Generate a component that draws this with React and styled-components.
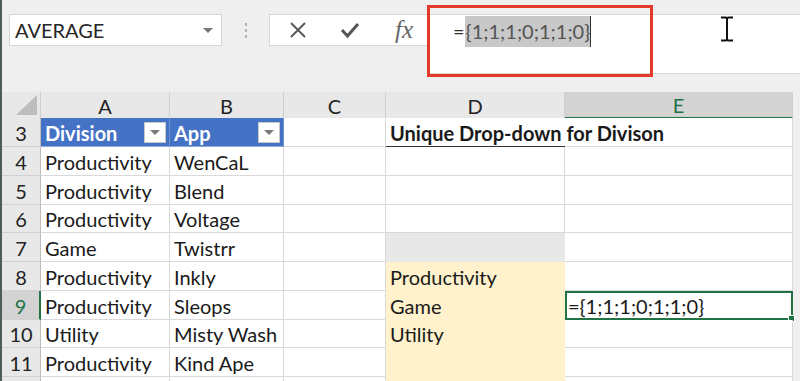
import React from "react";
import styled, { createGlobalStyle, css } from "styled-components";

const GlobalStyle = createGlobalStyle`
  html, body {
    margin: 0;
    padding: 0;
    background: #efefef;
    overflow: hidden;
  }
  body {
    font-family: Lato, "Liberation Sans", sans-serif;
  }
`;

const green = "#217346";
const grid = "#d9d9d9";
const cols = "39px 129px 114px 102px 179px 228px 7px";

const Window = styled.div`
  width: 800px;
  height: 381px;
  overflow: hidden;
  border-left: 2px solid #4f5d58;
  box-sizing: border-box;
  background: #efefef;
`;

const FormulaBar = styled.div`
  height: 92px;
  display: flex;
  align-items: flex-start;
  padding: 14px 0 0 7px;
  box-sizing: border-box;
`;

const NameBox = styled.div`
  width: 213px;
  height: 32px;
  background: #fff;
  border: 1px solid #d6d6d6;
  box-sizing: border-box;
  display: flex;
  align-items: center;
  justify-content: space-between;
  padding: 0 8px 0 5px;
  font-size: 20px;
  color: #262626;
`;

const Caret = styled.span`
  width: 0;
  height: 0;
  border-left: 5px solid transparent;
  border-right: 5px solid transparent;
  border-top: 5px solid #777;
`;

const Grip = styled.div`
  width: 47px;
  height: 32px;
  display: flex;
  flex-direction: column;
  align-items: center;
  justify-content: center;
  gap: 3px;

  span {
    width: 2px;
    height: 3px;
    background: #b3b3b3;
  }
`;

const ButtonPanel = styled.div`
  width: 158px;
  height: 32px;
  background: #fff;
  border: 1px solid #d6d6d6;
  border-right: none;
  box-sizing: border-box;
  display: flex;
  align-items: center;
  padding-left: 19px;
  gap: 33px;
  color: #555;
`;

const Fx = styled.span`
  font-family: "Liberation Serif", serif;
  font-style: italic;
  font-size: 25px;
  color: #666;
  margin-left: 2px;
`;

const InputWrap = styled.div`
  position: relative;
  flex: 1;
  height: 60px;
  margin-left: 2px;
  background: #fff;
  border-top: 1px solid #d6d6d6;
  border-bottom: 1px solid #d6d6d6;
  box-sizing: border-box;
  padding: 1px 0 0 24px;
  font-size: 20px;
  color: #333;
`;

const Formula = styled.div`
  display: flex;
  align-items: center;
  height: 30px;
`;

const Selected = styled.span`
  background: #c8c8c8;
  color: #555;
  padding: 3px 0 4px 1px;
  border-right: 1px solid #333;
`;

const Annotation = styled.div`
  position: absolute;
  left: -2px;
  top: -10px;
  width: 226px;
  height: 72px;
  border: 3px solid #e53a2b;
  box-sizing: border-box;
  pointer-events: none;
`;

const IBeam = styled.svg`
  position: absolute;
  left: 291px;
  top: 1px;
`;

const Row = styled.div`
  display: grid;
  grid-template-columns: ${cols};
  height: ${(p) => p.$h}px;
`;

const ColHead = styled.div`
  background: ${(p) => (p.$active ? "#d3d3d3" : "#e8e8e8")};
  color: ${(p) => (p.$active ? green : "#222")};
  border-right: 1px solid #cfcfcf;
  border-bottom: ${(p) => (p.$active ? `2px solid ${green}` : "1px solid #bdbdbd")};
  box-sizing: border-box;
  display: flex;
  align-items: center;
  justify-content: center;
  font-size: 20px;
  padding-top: 1px;
`;

const Corner = styled(ColHead)`
  justify-content: flex-end;
  align-items: flex-end;
  padding: 0 3px 3px 0;

  &::after {
    content: "";
    width: 0;
    height: 0;
    border-left: 21px solid transparent;
    border-bottom: 20px solid #bdbdbd;
  }
`;

const RowHead = styled.div`
  background: ${(p) => (p.$active ? "#d3d3d3" : "#e8e8e8")};
  color: ${(p) => (p.$active ? green : "#222")};
  border-bottom: 1px solid #d0d0d0;
  border-right: ${(p) => (p.$active ? `2px solid ${green}` : "1px solid #bdbdbd")};
  box-sizing: border-box;
  display: flex;
  align-items: center;
  justify-content: center;
  font-size: 20px;
  padding-top: 1px;
`;

const Cell = styled.div`
  position: relative;
  background: ${(p) => p.$fill || "#fff"};
  border-right: 1px solid ${(p) => p.$fill || grid};
  border-bottom: 1px solid ${(p) => p.$fill || grid};
  box-sizing: border-box;
  display: flex;
  align-items: center;
  padding: 1px 0 0 4px;
  font-size: 20px;
  color: #1a1a1a;
  white-space: nowrap;

  ${(p) =>
    p.$header &&
    css`
      background: #4472c4;
      border-right-color: #6d92d4;
      border-bottom-color: #8eaadb;
      color: #fff;
      font-weight: 700;
      justify-content: space-between;
      padding-right: 3px;
    `}

  ${(p) =>
    p.$selected &&
    css`
      border: 2px solid ${green};
      padding-left: 1px;
      &::after {
        content: "";
        position: absolute;
        right: -4px;
        bottom: -4px;
        width: 5px;
        height: 5px;
        background: ${green};
        border: 1px solid #fff;
      }
    `}
`;

/* D3 title spills over E3, underline only below D3 */
const TitleCell = styled(Cell)`
  grid-column: span 2;
  font-weight: 700;

  &::before {
    content: "";
    position: absolute;
    left: 0;
    bottom: -1px;
    width: 179px;
    height: 1px;
    background: #333;
  }
`;

const FilterButton = styled.span`
  width: 22px;
  height: 21px;
  background: #fff;
  border: 1px solid #c8c8c8;
  box-sizing: border-box;
  display: flex;
  align-items: center;
  justify-content: center;

  &::before {
    content: "";
    border-left: 5px solid transparent;
    border-right: 5px solid transparent;
    border-top: 5px solid #7a7a7a;
  }
`;

const Edge = styled.div`
  background: #efefef;
`;

const data = [
  { n: 4, a: "Productivity", b: "WenCaL" },
  { n: 5, a: "Productivity", b: "Blend" },
  { n: 6, a: "Productivity", b: "Voltage" },
  { n: 7, a: "Game", b: "Twistrr", d: "", fill: "#e8e8e8" },
  { n: 8, a: "Productivity", b: "Inkly", d: "Productivity", fill: "#fff2cc" },
  { n: 9, a: "Productivity", b: "Sleops", d: "Game", fill: "#fff2cc", e: "={1;1;1;0;1;1;0}" },
  { n: 10, a: "Utility", b: "Misty Wash", d: "Utility", fill: "#fff2cc" },
  { n: 11, a: "Productivity", b: "Kind Ape", d: "", fill: "#fff2cc" },
  { n: 12, a: "", b: "", d: "", fill: "#fff2cc", hideNum: true },
];

const heights = [29, 29, 28, 29, 29, 29, 28, 29, 29];

export default function App() {
  return (
    <>
      <GlobalStyle />
      <Window>
        <FormulaBar>
          <NameBox>
            AVERAGE
            <Caret />
          </NameBox>
          <Grip>
            <span />
            <span />
            <span />
          </Grip>
          <ButtonPanel>
            <svg width="18" height="18" viewBox="0 0 18 18">
              <path d="M2 2 L16 16 M16 2 L2 16" stroke="#555" strokeWidth="1.8" />
            </svg>
            <svg width="20" height="18" viewBox="0 0 20 18">
              <path d="M2 9 L7.5 15 L18 3" stroke="#555" strokeWidth="3" fill="none" />
            </svg>
            <Fx>fx</Fx>
          </ButtonPanel>
          <InputWrap>
            <Formula>
              =<Selected>{"{1;1;1;0;1;1;0}"}</Selected>
            </Formula>
            <Annotation />
            <IBeam width="14" height="26" viewBox="0 0 14 26">
              <path d="M1 1.5 H5.5 Q7 1.5 7 3 V23 Q7 24.5 5.5 24.5 H1 M13 1.5 H8.5 Q7 1.5 7 3 M7 23 Q7 24.5 8.5 24.5 H13" stroke="#111" strokeWidth="2" fill="none" />
            </IBeam>
          </InputWrap>
        </FormulaBar>

        <Row $h={26}>
          <Corner />
          <ColHead>A</ColHead>
          <ColHead>B</ColHead>
          <ColHead>C</ColHead>
          <ColHead>D</ColHead>
          <ColHead $active>E</ColHead>
          <Edge />
        </Row>

        <Row $h={29}>
          <RowHead>3</RowHead>
          <Cell $header>
            Division
            <FilterButton />
          </Cell>
          <Cell $header>
            App
            <FilterButton />
          </Cell>
          <Cell />
          <TitleCell>Unique Drop-down for Divison</TitleCell>
          <Edge />
        </Row>

        {data.map((r, i) => (
          <Row key={r.n} $h={heights[i]}>
            <RowHead $active={r.n === 9}>{r.hideNum ? "" : r.n}</RowHead>
            <Cell>{r.a}</Cell>
            <Cell>{r.b}</Cell>
            <Cell />
            <Cell $fill={r.fill}>{r.d}</Cell>
            <Cell $selected={!!r.e}>{r.e}</Cell>
            <Edge />
          </Row>
        ))}
      </Window>
    </>
  );
}
